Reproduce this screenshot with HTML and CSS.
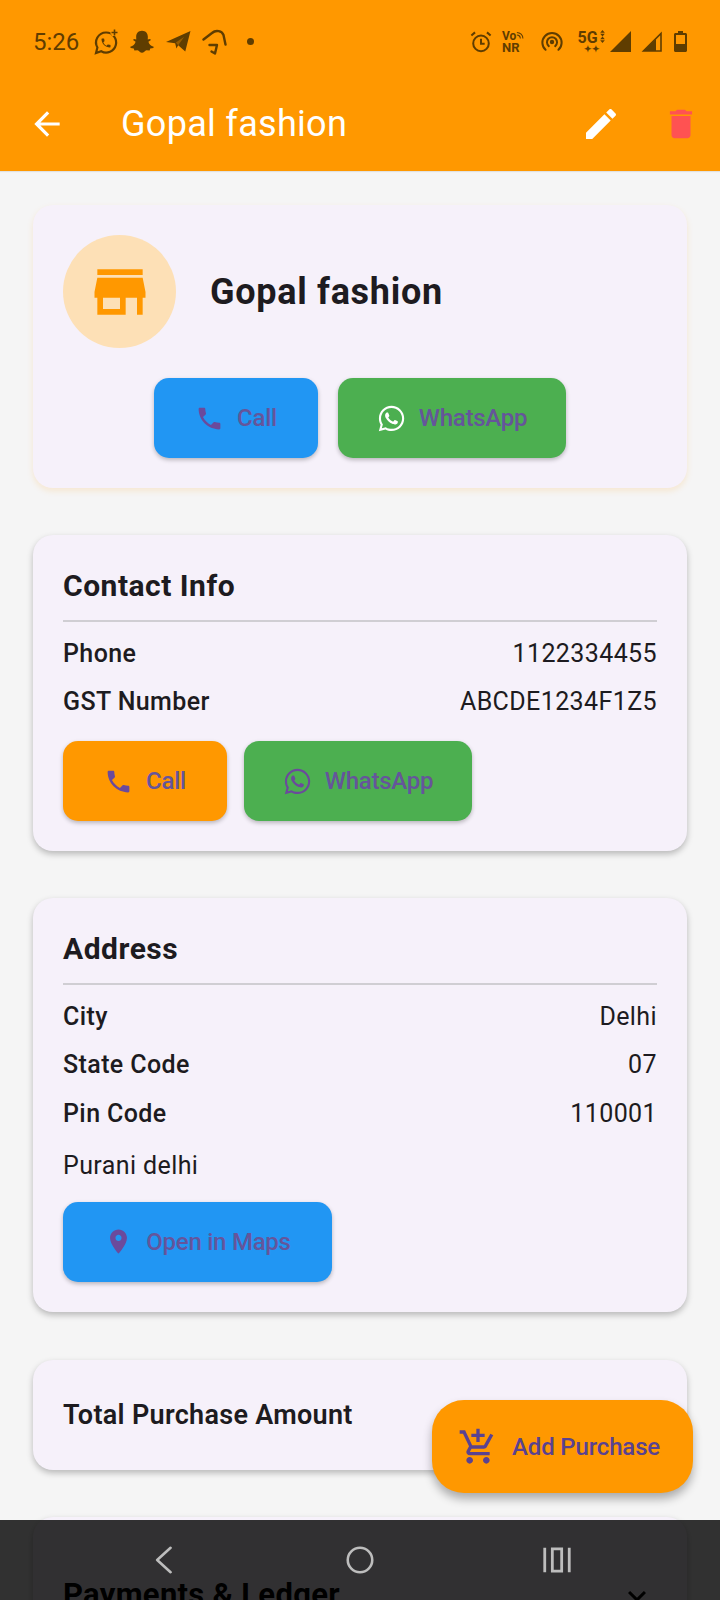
FILE: index.html
```html
<!DOCTYPE html>
<html lang="en">
<head>
  <meta charset="UTF-8" />
  <meta name="viewport" content="width=device-width, initial-scale=1.0"/>
  <title>Gopal fashion</title>
  <link rel="stylesheet" href="styles.css">
</head>
<body>
  <svg class="defs" width="0" height="0">
    <symbol id="i-phone" viewBox="0 0 24 24"><path d="M6.62 10.79c1.44 2.83 3.76 5.14 6.59 6.59l2.2-2.2c.27-.27.67-.36 1.02-.24 1.12.37 2.33.57 3.57.57.55 0 1 .45 1 1V20c0 .55-.45 1-1 1-9.39 0-17-7.61-17-17 0-.55.45-1 1-1h3.5c.55 0 1 .45 1 1 0 1.25.2 2.45.57 3.57.11.35.03.74-.25 1.02l-2.2 2.2z"/></symbol>
    <symbol id="i-whatsapp" viewBox="0 0 448 512"><path d="M380.9 97.1C339 55.1 283.2 32 223.9 32c-122.4 0-222 99.6-222 222 0 39.1 10.2 77.3 29.6 111L0 480l117.7-30.9c32.4 17.7 68.9 27 106.1 27h.1c122.3 0 224.1-99.6 224.1-222 0-59.3-25.2-115-67.1-157zm-157 341.6c-33.2 0-65.7-8.9-94-25.7l-6.7-4-69.8 18.3L72 359.2l-4.4-7c-18.5-29.4-28.2-63.3-28.2-98.2 0-101.7 82.8-184.5 184.6-184.5 49.3 0 95.6 19.2 130.4 54.1 34.8 34.9 56.2 81.2 56.1 130.5 0 101.8-84.9 184.6-186.6 184.6zm101.2-138.2c-5.5-2.8-32.8-16.2-37.9-18-5.1-1.9-8.8-2.8-12.5 2.8-3.7 5.6-14.3 18-17.6 21.8-3.2 3.7-6.5 4.2-12 1.4-32.6-16.3-54-29.1-75.5-66-5.7-9.8 5.7-9.1 16.3-30.3 1.8-3.7.9-6.9-.5-9.7-1.4-2.8-12.5-30.1-17.1-41.2-4.5-10.8-9.1-9.3-12.5-9.5-3.2-.2-6.9-.2-10.6-.2-3.7 0-9.7 1.4-14.8 6.9-5.1 5.6-19.4 19-19.4 46.3 0 27.3 19.9 53.7 22.6 57.4 2.8 3.7 39.1 59.7 94.8 83.8 35.2 15.2 49 16.5 66.6 13.9 10.7-1.6 32.8-13.4 37.4-26.4 4.6-13 4.6-24.1 3.2-26.4-1.3-2.5-5-3.9-10.5-6.6z"/></symbol>
  </svg>

  <div class="phone">
    <header class="appbar">
      <div class="status">
        <div class="status-left">
          <span class="time">5:26</span>
          <svg class="si wa-status" viewBox="0 0 26 26"><path d="M13 3.500a10 10 0 0 0-8.600 15L3 24l5.200-1.800A10 10 0 1 0 13 3.500z" fill="none" stroke="currentColor" stroke-width="2.200"/><use href="#i-phone" x="7" y="8" width="12" height="12" fill="currentColor"/><path d="M21 0v7M17.500 3.500h7" stroke="#ff9800" stroke-width="4.500"/><path d="M21.500 .5v6M18.500 3.500h6" stroke="currentColor" stroke-width="1.600"/></svg>
          <svg class="si snap" viewBox="0 0 24 24"><path d="M12 1.500c3.600 0 5.400 2.700 5.400 5.700l-.1 2.600 2.100-.6.900 1-2.400 1.500c.6 2.300 2.400 3.900 4.900 4.600l-.3 1.200-2.900.6-.6 1.700-2.800-.2c-1.500.5-2.600 2.300-4.200 2.300s-2.700-1.800-4.200-2.300l-2.800.2-.6-1.700-2.900-.6-.3-1.200c2.500-.7 4.300-2.300 4.900-4.600L3.700 10.200l.9-1 2.100.6-.1-2.600C6.600 4.200 8.400 1.500 12 1.500z" fill="currentColor"/></svg>
          <svg class="si tele" viewBox="0 0 24 24"><path d="M0 12.500 23.500 2 18.500 21.500l-6.800-5.800-1.700 3-1.200-5z" fill="currentColor"/><path d="M9.500 13 17.500 7.500 11.700 15.700" fill="#ff9800" opacity=".35"/></svg>
          <svg class="si arc" viewBox="0 0 26 26" fill="none" stroke="currentColor" stroke-width="2.400" stroke-linecap="round" stroke-linejoin="round"><path d="M1.500 10.500 10 4c4-3.500 10-2 11.500 2L23.500 15.500"/><path d="M7.500 16h7.500l-2 8.500-3.500-2"/></svg>
          <span class="dot"></span>
        </div>
        <div class="status-right">
          <svg class="si alarm" viewBox="0 0 24 24" fill="none" stroke="currentColor" stroke-width="2.200"><circle cx="12" cy="13.500" r="8.500"/><path d="M12 8.500v5.500h4M1.500 5 5.500 1.500M22.500 5l-4-3.500"/></svg>
          <div class="vonr">
            <span class="vo">Vo<svg viewBox="0 0 10 10" fill="none" stroke="currentColor" stroke-width="1.200"><path d="M1 2a7 7 0 0 1 7 7M1 5a4 4 0 0 1 4 4"/></svg></span>
            <span class="nr">NR</span>
          </div>
          <svg class="si hotspot" viewBox="0 0 24 24" fill="none" stroke="currentColor" stroke-width="2.200" stroke-linecap="round"><path d="M5 20.500a10.500 10.500 0 1 1 14 0"/><path d="M8.500 16.500a5.500 5.500 0 1 1 7 0"/><circle cx="12" cy="12" r="1.300" fill="currentColor"/></svg>
          <div class="fiveg">
            <span class="fg-row">5G<svg viewBox="0 0 6 14"><path d="M3 0 5.500 3h-5zM3 7 .5 4h5zM3 7l2.500 3h-5zM3 14 .5 11h5z" fill="currentColor"/></svg></span>
            <span class="sparks">✦✦</span>
          </div>
          <svg class="si signal" viewBox="0 0 21 21"><path d="M21 0v21H0z" fill="currentColor"/></svg>
          <svg class="si signal two" viewBox="0 0 21 21"><path d="M20 2.500V20H2.500z" fill="none" stroke="currentColor" stroke-width="1.600"/><path d="M15 8v12H2.500z" fill="currentColor"/></svg>
          <svg class="si batt" viewBox="0 0 13 21"><path d="M4 0h5v2h2.500c.8 0 1.500.7 1.500 1.500V19.500c0 .8-.7 1.500-1.500 1.500h-10C.7 21 0 20.300 0 19.500V3.500C0 2.700.7 2 1.500 2H4z" fill="currentColor"/><rect x="2" y="4" width="9" height="9" fill="#ff9800"/></svg>
        </div>
      </div>
      <div class="toolbar">
        <svg class="back" viewBox="0 0 24 24"><path d="M20 11H7.830l5.590-5.590L12 4l-8 8 8 8 1.410-1.410L7.830 13H20v-2z"/></svg>
        <h1>Gopal fashion</h1>
        <svg class="tool-icon edit" viewBox="0 0 24 24"><path d="M3 17.250V21h3.750L17.810 9.940l-3.750-3.750L3 17.250zM20.710 7.040c.39-.39.39-1.020 0-1.410l-2.340-2.340c-.39-.39-1.020-.39-1.410 0l-1.830 1.830 3.750 3.750 1.830-1.830z"/></svg>
        <svg class="tool-icon trash" viewBox="0 0 24 24"><path d="M6 19c0 1.100.9 2 2 2h8c1.100 0 2-.9 2-2V7H6v12zM19 4h-3.500l-1-1h-5l-1 1H5v2h14V4z"/></svg>
      </div>
    </header>

    <main class="content">
      <section class="card hero">
        <div class="hero-top">
          <div class="avatar">
            <svg viewBox="0 0 24 24"><path d="M20 4H4v2h16V4zm1 10v-2l-1-5H4l-1 5v2h1v6h10v-6h4v6h2v-6h1zm-9 4H6v-4h6v4z"/></svg>
          </div>
          <h2 class="shop-name">Gopal fashion</h2>
        </div>
        <div class="hero-actions">
          <a class="btn blue call-wide"><svg class="btn-icon"><use href="#i-phone"/></svg>Call</a>
          <a class="btn green wa-wide"><svg class="btn-icon white"><use href="#i-whatsapp"/></svg>WhatsApp</a>
        </div>
      </section>

      <section class="card">
        <h3 class="card-title">Contact Info</h3>
        <div class="row"><span class="label">Phone</span><span>1122334455</span></div>
        <div class="row"><span class="label">GST Number</span><span>ABCDE1234F1Z5</span></div>
        <div class="actions">
          <a class="btn orange call-wide"><svg class="btn-icon"><use href="#i-phone"/></svg>Call</a>
          <a class="btn green wa-wide"><svg class="btn-icon"><use href="#i-whatsapp"/></svg>WhatsApp</a>
        </div>
      </section>

      <section class="card">
        <h3 class="card-title">Address</h3>
        <div class="row"><span class="label">City</span><span>Delhi</span></div>
        <div class="row"><span class="label">State Code</span><span>07</span></div>
        <div class="row"><span class="label">Pin Code</span><span>110001</span></div>
        <p class="addr">Purani delhi</p>
        <div class="actions">
          <a class="btn blue maps"><svg class="btn-icon" viewBox="0 0 24 24"><path d="M12 2C8.130 2 5 5.130 5 9c0 5.250 7 13 7 13s7-7.750 7-13c0-3.870-3.130-7-7-7zm0 9.500c-1.380 0-2.500-1.120-2.500-2.500s1.120-2.500 2.500-2.500 2.500 1.120 2.500 2.500-1.120 2.500-2.500 2.500z"/></svg>Open in Maps</a>
        </div>
      </section>

      <section class="card total">
        <span class="total-label">Total Purchase Amount</span>
        <span class="total-value">₹0.00</span>
      </section>

      <section class="card ledger">
        <h3 class="ledger-title">Payments &amp; Ledger</h3>
        <svg class="chevron" viewBox="0 0 24 24"><path d="M16.590 8.590 12 13.170 7.410 8.590 6 10l6 6 6-6z"/></svg>
      </section>
    </main>

    <a class="fab">
      <svg viewBox="0 0 24 24"><path d="M11 9h2V6h3V4h-3V1h-2v3H8v2h3v3zm-4 9c-1.100 0-1.990.9-1.990 2S5.900 22 7 22s2-.9 2-2-.9-2-2-2zm10 0c-1.100 0-1.990.9-1.990 2s.89 2 1.990 2 2-.9 2-2-.9-2-2-2zm-9.830-3.250.03-.12.9-1.630h7.450c.75 0 1.410-.41 1.750-1.030l3.860-7.010L19.420 4h-.01l-1.100 2-2.760 5H8.530l-.13-.27L6.160 6l-.95-2-.94-2H1v2h2l3.600 7.590-1.350 2.450c-.16.280-.25.610-.25.960 0 1.100.9 2 2 2h12v-2H7.420c-.13 0-.25-.11-.25-.25z"/></svg>
      Add Purchase
    </a>

    <nav class="navbar">
      <svg viewBox="0 0 24 24" fill="none" stroke="currentColor" stroke-width="2.200" stroke-linecap="round" stroke-linejoin="round"><path d="M18.500 1.500 7 12l11.500 10.500"/></svg>
      <svg viewBox="0 0 24 24" fill="none" stroke="currentColor" stroke-width="2.200"><circle cx="12" cy="12" r="10.500"/></svg>
      <svg viewBox="0 0 24 24" fill="none" stroke="currentColor" stroke-width="2.400"><path d="M1.500 1.500v21M22.500 1.500v21M8 2.500h8v19H8z"/></svg>
    </nav>
  </div>
</body>
</html>
```

FILE: styles.css
```css
* {
  box-sizing: border-box;
}
body {
  margin: 0;
  font-family: Roboto, "Noto Sans", sans-serif;
  background-color: #f5f5f5;
  color: #1d1b20;
}
.defs {
  position: absolute;
}
.phone {
  position: relative;
  width: 720px;
  height: 1600px;
  overflow: hidden;
}

/* app bar + status bar */
.appbar {
  height: 171px;
  background-color: #ff9800;
  box-shadow: 0 1px 1px rgba(0, 0, 0, 0.08);
}
.status {
  height: 83px;
  padding: 0 33px;
  display: flex;
  align-items: center;
  justify-content: space-between;
  color: #5f3d00;
}
.status-left, .status-right {
  display: flex;
  align-items: center;
}
.time {
  font-size: 24px;
  width: 60px;
}
.si {
  flex: none;
}
.wa-status {
  width: 26px;
  height: 26px;
  margin-right: 10px;
}
.snap {
  width: 26px;
  height: 26px;
  margin-right: 11px;
}
.tele {
  width: 25px;
  height: 25px;
  margin-right: 11px;
}
.arc {
  width: 26px;
  height: 26px;
  margin-right: 19px;
}
.dot {
  width: 7px;
  height: 7px;
  border-radius: 50%;
  background-color: currentColor;
}
.alarm {
  width: 22px;
  height: 22px;
  margin-right: 10px;
}
.vonr {
  width: 23px;
  margin-right: 16px;
  display: flex;
  flex-direction: column;
  font-size: 12px;
  font-weight: 700;
  line-height: 12px;
}
.vo {
  display: flex;
}
.vo svg {
  width: 10px;
  height: 10px;
}
.nr {
  font-size: 13px;
}
.hotspot {
  width: 22px;
  height: 22px;
  margin-right: 15px;
}
.fiveg {
  width: 27px;
  margin-right: 5px;
  display: flex;
  flex-direction: column;
  align-items: center;
  font-size: 16px;
  font-weight: 700;
  line-height: 15px;
}
.fg-row {
  display: flex;
}
.fg-row svg {
  width: 7px;
  height: 13px;
  margin-left: 1px;
}
.sparks {
  font-size: 9px;
  line-height: 8px;
}
.signal {
  width: 21px;
  height: 21px;
  margin-right: 10px;
}
.signal.two {
  margin-right: 12px;
}
.batt {
  width: 13px;
  height: 21px;
}
.toolbar {
  height: 80px;
  display: flex;
  align-items: center;
  padding-top: 2px;
}
.back {
  width: 38px;
  height: 38px;
  margin-left: 28px;
  fill: #fff;
}
h1 {
  margin: 0 0 0 55px;
  flex: 1;
  font-size: 36px;
  font-weight: 400;
  letter-spacing: 0.3px;
  color: #fff;
}
.tool-icon {
  width: 40px;
  height: 40px;
}
.edit {
  fill: #fff;
  margin-right: 41px;
}
.trash {
  width: 38px;
  fill: #ff5252;
  margin-right: 20px;
}

/* cards */
.content {
  padding: 34px 33px 0;
  display: flex;
  flex-direction: column;
  gap: 47px;
}
.card {
  background-color: #f6f1fa;
  border-radius: 20px;
  padding: 30px;
  box-shadow: 0 3px 6px rgba(0, 0, 0, 0.25);
}
.hero {
  box-shadow: 0 3px 6px rgba(255, 152, 0, 0.15);
  height: 283px;
}
.hero-top {
  display: flex;
  align-items: center;
  gap: 34px;
}
.avatar {
  width: 113px;
  height: 113px;
  border-radius: 50%;
  background-color: #fde0b6;
  display: flex;
  align-items: center;
  justify-content: center;
}
.avatar svg {
  width: 68px;
  height: 68px;
  fill: #ff9800;
}
.shop-name {
  margin: 0;
  font-size: 36px;
  font-weight: 700;
  letter-spacing: 0.7px;
}
.hero-actions {
  margin-top: 30px;
  display: flex;
  justify-content: center;
  gap: 20px;
}
.card-title {
  margin: 1px 0 7px;
  font-size: 30px;
  font-weight: 700;
  letter-spacing: 0.5px;
  line-height: 40px;
  padding-bottom: 14px;
  border-bottom: 2px solid #d0ced3;
}
.row {
  display: flex;
  justify-content: space-between;
  align-items: center;
  font-size: 25px;
  letter-spacing: 0.4px;
  height: 48.5px;
}
.label {
  font-weight: 500;
}
.addr {
  margin: 14px 0 22px;
  font-size: 25px;
  letter-spacing: 0.4px;
  line-height: 28px;
}
.actions {
  margin-top: 15px;
  display: flex;
  gap: 17px;
}

/* buttons */
.btn {
  height: 80px;
  border-radius: 15px;
  display: flex;
  align-items: center;
  justify-content: center;
  gap: 13px;
  font-size: 24px;
  font-weight: 500;
  letter-spacing: -0.25px;
  color: #65559b;
  box-shadow: 0 2px 4px rgba(0, 0, 0, 0.25);
}
.blue {
  background-color: #2196f3;
}
.green {
  background-color: #4caf50;
}
.orange {
  background-color: #ff9800;
}
.call-wide {
  width: 164px;
}
.wa-wide {
  width: 228px;
}
.maps {
  width: 269px;
}
.btn-icon {
  width: 29px;
  height: 29px;
  fill: #6b4a9c;
}
.btn-icon.white {
  fill: #fff;
}

.total {
  margin-top: 1px;
  height: 110px;
  display: flex;
  align-items: center;
  justify-content: space-between;
}
.total-label {
  font-size: 27px;
  font-weight: 600;
  letter-spacing: 0.3px;
}
.total-value {
  font-size: 32px;
  font-weight: 700;
  margin-bottom: 4px;
}
.ledger {
  height: 120px;
  display: flex;
  justify-content: space-between;
  align-items: flex-start;
  padding-top: 57px;
  color: #000;
}
.ledger-title {
  margin: 1px 0 0;
  font-size: 31px;
  font-weight: 700;
  letter-spacing: 0.3px;
  line-height: 40px;
}
.chevron {
  width: 36px;
  height: 36px;
  margin: 4px 2px 0 0;
}

/* floating bits */
.fab {
  position: absolute;
  left: 432px;
  top: 1400px;
  width: 261px;
  height: 93px;
  border-radius: 32px;
  background-color: #ff9800;
  box-shadow: 0 6px 10px rgba(0, 0, 0, 0.3);
  display: flex;
  align-items: center;
  gap: 14px;
  padding-left: 26px;
  font-size: 24px;
  font-weight: 500;
  letter-spacing: -0.15px;
  color: #5a4290;
}
.fab svg {
  width: 40px;
  height: 40px;
  fill: currentColor;
}
.navbar {
  position: absolute;
  left: 0;
  bottom: 0;
  width: 720px;
  height: 80px;
  background-color: rgba(0, 0, 0, 0.8);
  color: #bdbdbd;
  display: flex;
  align-items: flex-start;
  padding: 26px 0 0 149px;
}
.navbar svg {
  flex: none;
  width: 28px;
  height: 28px;
  margin-right: 169px;
}
```
